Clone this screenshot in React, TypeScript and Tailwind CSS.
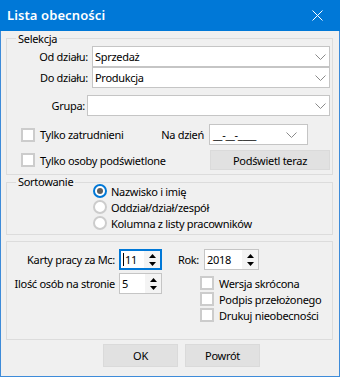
import React from 'react'

function Chevron() {
  return (
    <svg width="11" height="6" viewBox="0 0 11 6" className="shrink-0">
      <polyline points="0.5,0.5 5.5,5.5 10.5,0.5" fill="none" stroke="#8a8a8a" strokeWidth="1" />
    </svg>
  )
}

function Combo({ value, className = '' }: { value?: string; className?: string }) {
  return (
    <div
      className={`flex h-[21px] items-center border border-[#c5c5c5] bg-white pl-[2px] pr-[3px] ${className}`}
    >
      <span className="flex-1 truncate">{value}</span>
      <Chevron />
    </div>
  )
}

function Check() {
  return <span className="block h-[14px] w-[14px] shrink-0 border-2 border-[#cccccc] bg-white" />
}

function Radio({ checked = false }: { checked?: boolean }) {
  return checked ? (
    <span className="flex h-[14px] w-[14px] shrink-0 items-center justify-center rounded-full border-2 border-[#0078d7] bg-white">
      <span className="block h-[6px] w-[6px] rounded-full bg-[#5f5f5f]" />
    </span>
  ) : (
    <span className="block h-[14px] w-[14px] shrink-0 rounded-full border-2 border-[#cccccc] bg-white" />
  )
}

function Arrows() {
  return (
    <div className="flex h-full w-[16px] shrink-0 flex-col items-center justify-center gap-[4px] bg-[#f4f4f4]">
      <svg width="7" height="4" viewBox="0 0 7 4">
        <polygon points="3.5,0 7,4 0,4" fill="#000" />
      </svg>
      <svg width="7" height="4" viewBox="0 0 7 4">
        <polygon points="0,0 7,0 3.5,4" fill="#000" />
      </svg>
    </div>
  )
}

function Spin({
  value,
  width,
  focused = false,
}: {
  value: string
  width: string
  focused?: boolean
}) {
  return (
    <div
      className={`flex h-[21px] items-center bg-white ${width} ${
        focused ? 'border-2 border-[#0078d7]' : 'border border-[#c5c5c5]'
      }`}
    >
      <span className="flex flex-1 items-center pl-[2px]">
        {focused && <span className="mr-[1px] block h-[13px] w-px bg-black" />}
        {value}
      </span>
      <Arrows />
    </div>
  )
}

export default function App() {
  return (
    <div className="flex h-[377px] w-[340px] flex-col bg-[#f0f0f0] font-['Noto_Sans',sans-serif] text-[11px] leading-[15px] tracking-[-0.3px] text-black">
      {/* title bar */}
      <div className="flex h-[31px] shrink-0 items-center justify-between bg-[#0078d7] pl-[7px] pr-[17px]">
        <span className="text-[13px] font-semibold tracking-[0.1px] text-white">Lista obecności</span>
        <svg width="11" height="11" viewBox="0 0 11 11">
          <path d="M0.5 0.5 L10.5 10.5 M10.5 0.5 L0.5 10.5" stroke="#fff" strokeWidth="1" />
        </svg>
      </div>

      <div className="flex flex-1 flex-col border-x border-b border-[#3d8bd9] pl-[5px] pr-[6px]">
        {/* Selekcja */}
        <fieldset className="border border-[#dcdcdc] pb-[4px]">
          <legend className="ml-[9px] px-[2px] leading-[15px]">Selekcja</legend>

          <div className="flex h-[21px] items-center">
            <span className="w-[81px] whitespace-nowrap text-right">Od działu:</span>
            <Combo value="Sprzedaż" className="ml-[4px] mr-[2px] flex-1" />
          </div>
          <div className="flex h-[21px] items-center">
            <span className="w-[81px] whitespace-nowrap text-right">Do działu:</span>
            <Combo value="Produkcja" className="ml-[4px] mr-[2px] flex-1" />
          </div>
          <div className="mt-[7px] flex h-[21px] items-center">
            <span className="w-[78px] text-right">Grupa:</span>
            <Combo className="ml-[2px] mr-[2px] flex-1" />
          </div>

          <div className="mt-[8px] flex h-[21px] items-center pl-[14px]">
            <Check />
            <span className="ml-[5px]">Tylko zatrudnieni</span>
            <span className="ml-auto">Na dzień</span>
            <div className="ml-[5px] mr-[24px] flex h-[21px] w-[99px] items-center border border-[#c5c5c5] bg-white pl-[3px] pr-[10px]">
              <span className="flex-1">__-__-____</span>
              <Chevron />
            </div>
          </div>
          <div className="mt-[5px] flex h-[20px] items-center pl-[14px]">
            <Check />
            <span className="ml-[5px]">Tylko osoby podświetlone</span>
            <button className="ml-auto mr-[2px] h-[20px] w-[120px] border border-[#dadada] bg-[#e1e1e1]">
              Podświetl teraz
            </button>
          </div>
        </fieldset>

        {/* Sortowanie */}
        <fieldset className="border border-[#dcdcdc] pb-[3px]">
          <legend className="ml-[9px] px-[2px] leading-[14px]">Sortowanie</legend>
          <div className="-mt-[6px] flex flex-col pl-[86px]">
            <div className="flex h-[16px] items-center gap-[4px]">
              <Radio checked />
              <span>Nazwisko i imię</span>
            </div>
            <div className="flex h-[16px] items-center gap-[4px]">
              <Radio />
              <span>Oddział/dział/zespół</span>
            </div>
            <div className="flex h-[16px] items-center gap-[4px]">
              <Radio />
              <span>Kolumna z listy pracowników</span>
            </div>
          </div>
        </fieldset>

        {/* Karty pracy */}
        <div className="mt-[6px] flex h-[99px] border border-[#dcdcdc] pt-[7px]">
          <div className="flex w-[155px] shrink-0 flex-col">
            <div className="flex h-[21px] items-center">
              <span className="w-[108px] whitespace-nowrap text-right">Karty pracy za Mc:</span>
              <div className="ml-[4px]">
                <Spin value="11" width="w-[43px]" focused />
              </div>
            </div>
            <div className="mt-[3px] flex h-[21px] items-center">
              <span className="flex w-[108px] justify-end whitespace-nowrap">Ilość osób na stronie</span>
              <div className="ml-[4px]">
                <Spin value="5" width="w-[43px]" />
              </div>
            </div>
          </div>
          <div className="flex flex-1 flex-col">
            <div className="flex h-[21px] items-center">
              <span className="w-[42px] pr-[5px] text-right">Rok:</span>
              <Spin value="2018" width="w-[55px]" />
            </div>
            <div className="mt-[5px] flex flex-col pl-[38px]">
              <div className="flex h-[16px] items-center gap-[5px] whitespace-nowrap">
                <Check />
                <span>Wersja skrócona</span>
              </div>
              <div className="flex h-[16px] items-center gap-[5px] whitespace-nowrap">
                <Check />
                <span>Podpis przełożonego</span>
              </div>
              <div className="flex h-[16px] items-center gap-[5px] whitespace-nowrap">
                <Check />
                <span>Drukuj nieobecności</span>
              </div>
            </div>
          </div>
        </div>

        {/* buttons */}
        <div className="mt-[4px] flex gap-[7px] pl-[97px]">
          <button className="h-[23px] w-[75px] border border-[#dadada] bg-[#e1e1e1]">OK</button>
          <button className="h-[23px] w-[75px] border border-[#dadada] bg-[#e1e1e1]">Powrót</button>
        </div>
      </div>
    </div>
  )
}
